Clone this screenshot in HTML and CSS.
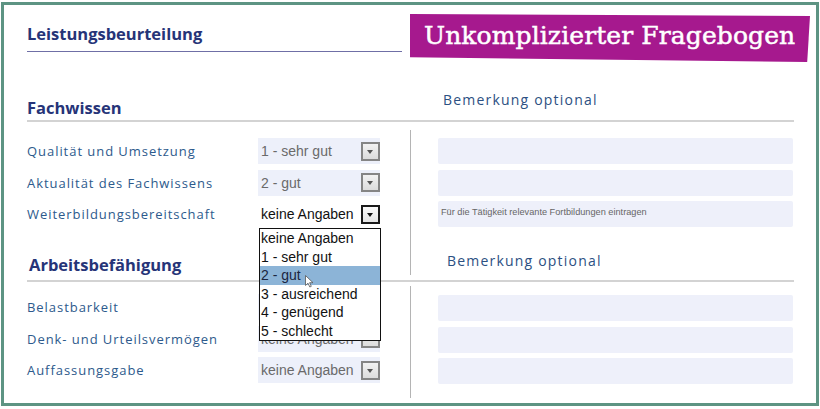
FILE: index.html
```html
<!DOCTYPE html>
<html lang="de">
<head>
    <meta charset="UTF-8">
    <title>Leistungsbeurteilung</title>
    <link rel="stylesheet" href="styles.css">
</head>
<body>
    <div class="frame">
        <div class="sheet">
            <header class="top">
                <h1 class="title">Leistungsbeurteilung</h1>
                <div class="banner">Unkomplizierter Fragebogen</div>
            </header>

            <!-- Fachwissen -->
            <section class="group group_first">
                <div class="group_head">
                    <h2>Fachwissen</h2>
                    <h3>Bemerkung optional</h3>
                </div>
                <div class="group_body">
                    <div class="ratings">
                        <div class="row">
                            <span class="label">Qualität und Umsetzung</span>
                            <div class="pick"><span>1 - sehr gut</span><i class="arrow"></i></div>
                        </div>
                        <div class="row">
                            <span class="label">Aktualität des Fachwissens</span>
                            <div class="pick"><span>2 - gut</span><i class="arrow"></i></div>
                        </div>
                        <div class="row">
                            <span class="label">Weiterbildungsbereitschaft</span>
                            <div class="pick pick_open"><span>keine Angaben</span><i class="arrow"></i>
                                <ul class="options">
                                    <li>keine Angaben</li>
                                    <li>1 - sehr gut</li>
                                    <li class="hover">2 - gut</li>
                                    <li>3 - ausreichend</li>
                                    <li>4 - genügend</li>
                                    <li>5 - schlecht</li>
                                    <svg class="cursor" width="9" height="13" viewBox="0 0 9 13"><path d="M0.5 0.5 L0.5 10.5 L3 8.2 L4.8 12 L6.3 11.3 L4.6 7.7 L8 7.7 Z" fill="#fff" stroke="#555" stroke-width="0.8" stroke-linejoin="round"/></svg>
                                </ul>
                            </div>
                        </div>
                    </div>
                    <div class="notes">
                        <textarea></textarea>
                        <textarea></textarea>
                        <textarea placeholder="Für die Tätigkeit relevante Fortbildungen eintragen"></textarea>
                    </div>
                </div>
            </section>

            <!-- Arbeitsbefähigung -->
            <section class="group group_second">
                <div class="group_head">
                    <h2>Arbeitsbefähigung</h2>
                    <h3>Bemerkung optional</h3>
                </div>
                <div class="group_body">
                    <div class="ratings">
                        <div class="row">
                            <span class="label">Belastbarkeit</span>
                            <div class="pick"><span>keine Angaben</span><i class="arrow"></i></div>
                        </div>
                        <div class="row">
                            <span class="label">Denk- und Urteilsvermögen</span>
                            <div class="pick"><span>keine Angaben</span><i class="arrow"></i></div>
                        </div>
                        <div class="row">
                            <span class="label">Auffassungsgabe</span>
                            <div class="pick"><span>keine Angaben</span><i class="arrow"></i></div>
                        </div>
                    </div>
                    <div class="notes">
                        <textarea></textarea>
                        <textarea></textarea>
                        <textarea></textarea>
                    </div>
                </div>
            </section>
        </div>
    </div>
</body>
</html>
```

FILE: styles.css
```css
*{
    margin: 0;
    padding: 0;
    box-sizing: border-box;
}
html, body{
    background-color: #fff;
}
ul{
    list-style: none;
}
.frame{
    width: 820px;
    height: 409px;
    padding: 2px 1px 3px 1px;
}
.sheet{
    height: 100%;
    border: 3px solid #5d9483;
    padding: 0 22px 0 23px;
    font-family: "Open Sans", "DejaVu Sans", sans-serif;
}
/* Kopfzeile */
.top{
    display: flex;
    align-items: flex-start;
    padding-top: 9px;
    margin-right: -17px;
}
.title{
    width: 375px;
    padding: 9px 0 7px;
    line-height: 21px;
    font-size: 16.5px;
    font-weight: 700;
    color: #263478;
    border-bottom: 1px solid #6f6fa6;
}
.banner{
    width: 400px;
    height: 48px;
    margin-left: 8px;
    padding-left: 14px;
    background-color: #a6198e;
    color: #fff;
    font-family: "DejaVu Serif", serif;
    font-size: 25px;
    line-height: 44px;
    letter-spacing: 0.1px;
    white-space: nowrap;
    -webkit-text-stroke: 0.5px #fff;
    clip-path: polygon(0 0, 100% 2px, 99.3% 100%, 0 90%);
}
/* Abschnitte */
.group_head{
    display: flex;
    align-items: flex-end;
    border-bottom: 2px solid #d3d3d3;
}
.group_head h2{
    width: 383px;
    font-size: 16.5px;
    font-weight: 700;
    line-height: 22px;
    color: #263478;
}
.group_head h3{
    font-size: 14px;
    font-weight: 400;
    line-height: 18px;
    letter-spacing: 1.2px;
    color: #2c5082;
}
.group_first{
    margin-top: 29px;
}
.group_first h2{
    padding-bottom: 1px;
}
.group_first h3{
    padding: 0 0 11px 33px;
}
.group_second .group_head{
    padding-bottom: 5px;
}
.group_second h2{
    padding: 2px 0 0 2px;
    line-height: 20px;
}
.group_second h3{
    border-left: 1px solid #b4b4b4;
    padding: 0 0 5px 36px;
}
.group_body{
    display: flex;
}
.group_first .group_body{
    height: 130px;
    padding-top: 8px;
}
.group_second .group_body{
    height: 116px;
    padding-top: 4px;
}
.ratings{
    width: 383px;
    display: flex;
    flex-direction: column;
    gap: 5.5px;
    padding-top: 8px;
}
.row{
    display: flex;
    align-items: center;
    height: 26px;
}
.label{
    width: 231px;
    font-size: 13px;
    letter-spacing: 0.95px;
    color: #2d5a8c;
}
/* Auswahlfelder */
.pick{
    position: relative;
    width: 122px;
    height: 26px;
    display: flex;
    align-items: center;
    justify-content: space-between;
    padding-left: 3px;
    background-color: #edf0fa;
    font-family: "Liberation Sans", Arial, sans-serif;
    font-size: 14px;
    color: #6a6a6a;
}
.arrow{
    position: relative;
    width: 19px;
    height: 19px;
    border: 2px solid #858585;
    background: linear-gradient(#f2f2f2, #dcdcdc);
}
.arrow::after{
    content: "";
    position: absolute;
    left: 4px;
    top: 6px;
    border-left: 3.5px solid transparent;
    border-right: 3.5px solid transparent;
    border-top: 4px solid #555;
}
.pick_open{
    background-color: #fff;
    color: #111;
}
.pick_open .arrow{
    border-color: #1a1a1a;
    background: linear-gradient(#fafafa, #e4e4e4);
}
.pick_open .arrow::after{
    border-top-color: #111;
}
.options{
    position: absolute;
    top: calc(100% + 1px);
    left: 1px;
    width: 122px;
    border: 1px solid #111;
    background-color: #fff;
    z-index: 5;
}
.options li{
    height: 18.5px;
    line-height: 18.5px;
    padding-left: 1px;
    color: #111;
}
.options .hover{
    background-color: #8cb4d7;
    color: #1b2540;
}
.cursor{
    position: absolute;
    left: 45px;
    top: 46px;
}
/* Bemerkungen */
.notes{
    flex: 1;
    display: flex;
    flex-direction: column;
    gap: 5.5px;
    border-left: 1px solid #b4b4b4;
    padding: 8px 0 0 27px;
}
.group_second .notes{
    padding-top: 9px;
}
.notes textarea{
    display: block;
    width: 355px;
    height: 26px;
    border: none;
    border-radius: 2px;
    outline: none;
    resize: none;
    overflow: hidden;
    padding: 6px 3px 0;
    background-color: #eef0fa;
    font-family: "Liberation Sans", Arial, sans-serif;
    font-size: 9.2px;
}
.notes textarea::placeholder{
    color: #666;
}
```
